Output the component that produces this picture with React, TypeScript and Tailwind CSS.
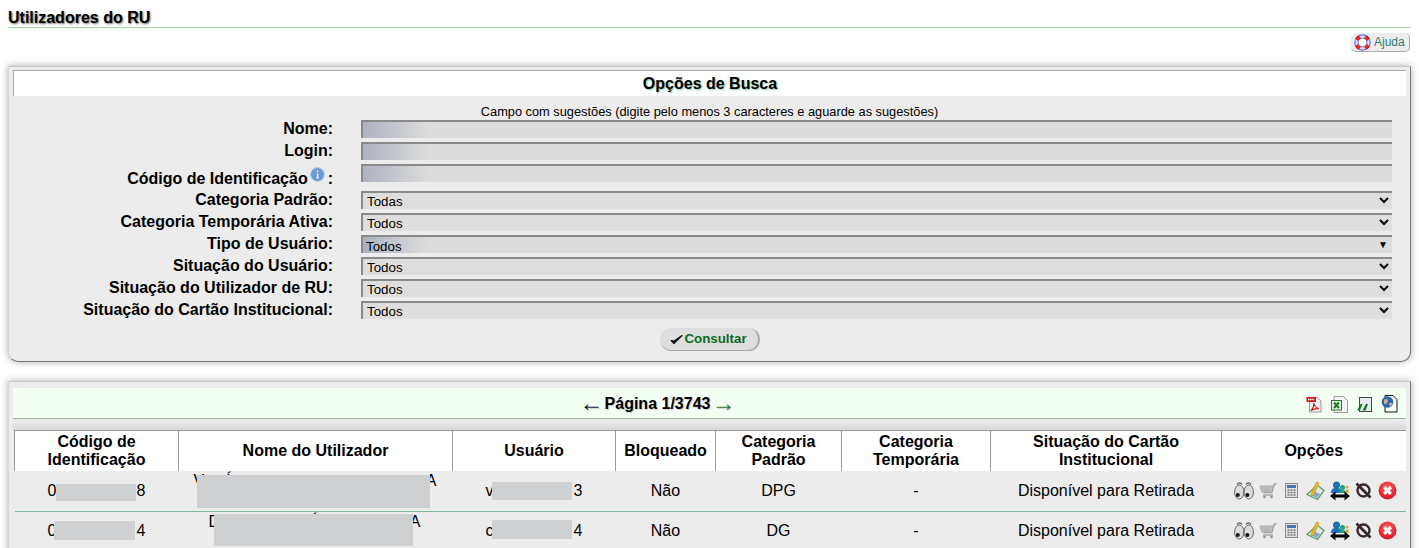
const font = { fontFamily: '"Liberation Sans", Arial, sans-serif' };

const textFields = ['Nome:', 'Login:'];

const selects = [
  { label: 'Categoria Padrão:', value: 'Todas' },
  { label: 'Categoria Temporária Ativa:', value: 'Todos' },
  { label: 'Tipo de Usuário:', value: 'Todos', active: true },
  { label: 'Situação do Usuário:', value: 'Todos' },
  { label: 'Situação do Utilizador de RU:', value: 'Todos' },
  { label: 'Situação do Cartão Institucional:', value: 'Todos' },
];

const columns = [
  { title: ['Código de', 'Identificação'], width: 'w-[164px]' },
  { title: ['Nome do Utilizador'], width: 'w-[274px]' },
  { title: ['Usuário'], width: 'w-[163px]' },
  { title: ['Bloqueado'], width: 'w-[100px]' },
  { title: ['Categoria', 'Padrão'], width: 'w-[126px]' },
  { title: ['Categoria', 'Temporária'], width: 'w-[149px]' },
  { title: ['Situação do Cartão', 'Institucional'], width: 'w-[231px]' },
  { title: ['Opções'], width: 'w-[184px]' },
];

const rows = [
  {
    height: 'h-[41px]',
    code: ['0', '8'], codeMask: 'left-[41px] w-[80px] top-[13px] h-[17px]',
    name: { first: 'V', accent: 'ml-[22px]', box: 'pl-[15px] pr-[16px]', mask: 'left-[18px] w-[233px] top-[4px] h-[33px]' },
    user: ['v', '3'], userMask: 'left-[39px] w-[80px] top-[11px] h-[18px]',
    blocked: 'Não', category: 'DPG',
  },
  {
    height: 'h-[38px]',
    code: ['0', '4'], codeMask: 'left-[39px] w-[81px] top-[9px] h-[19px]',
    name: { first: 'D', accent: 'ml-[92px]', box: 'pl-[30px] pr-[32px]', mask: 'left-[35px] w-[199px] top-[2px] h-[32px]' },
    user: ['c', '4'], userMask: 'left-[39px] w-[80px] top-[8px] h-[19px]',
    blocked: 'Não', category: 'DG',
  },
];

function Lifebuoy() {
  return (
    <svg width="17" height="17" viewBox="0 0 17 17">
      <circle cx="8.5" cy="8.5" r="7.7" fill="#dcdcff" stroke="#6f6fdc" strokeWidth="1.2" />
      <circle cx="8.5" cy="8.5" r="4.4" fill="#fff" stroke="#6f6fdc" strokeWidth="1" />
      <path d="M2.800 2.800 5.400 5.400M14.200 2.800 11.600 5.400M2.800 14.200 5.400 11.600M14.200 14.200 11.600 11.600" stroke="#c4160c" strokeWidth="4.200" />
      <circle cx="4.500" cy="4.500" r="1.300" fill="#ff3a1a" />
      <circle cx="12.500" cy="4.500" r="1.300" fill="#ff3a1a" />
      <circle cx="4.500" cy="12.500" r="1.300" fill="#ff3a1a" />
      <circle cx="12.500" cy="12.500" r="1.300" fill="#ff3a1a" />
    </svg>
  );
}

function InfoIcon() {
  return (
    <svg width="15" height="15" viewBox="0 0 15 15">
      <circle cx="7.5" cy="7.5" r="6.8" fill="#6f9ad2" stroke="#a9c0de" strokeWidth="1" />
      <path d="M6.400 6.400h1.800v4h1v.8H6.200v-.8h.9V7.200h-.7zM6.900 3.600h1.300v1.500H6.900z" fill="#fff" />
    </svg>
  );
}

function CheckIcon() {
  return (
    <svg width="13" height="11" viewBox="0 0 13 11">
      <path d="M1 6.500 4 9.500 12 1.500 4.200 7z" fill="#111" stroke="#111" strokeWidth="1.100" strokeLinejoin="round" />
    </svg>
  );
}

function PdfIcon() {
  return (
    <svg width="17" height="17" viewBox="0 0 17 17">
      <path d="M3.500 1.500h8l3.500 3.500v11H3.500z" fill="#f2f2f2" stroke="#9a9a9a" />
      <rect x="0.500" y="1" width="9.500" height="5" fill="#d8161c" />
      <path d="M2 3.500h6.500" stroke="#fff" strokeWidth="1.400" strokeDasharray="1.500 .6" />
      <path d="M5 14.500c2-2 3-5 3-7.500 .6 3 2 5 5 5.700-3-.4-5.500 .2-8 1.800z" fill="none" stroke="#d8161c" strokeWidth="1.100" />
    </svg>
  );
}

function XlsIcon() {
  return (
    <svg width="17" height="17" viewBox="0 0 17 17">
      <path d="M3 .500h9.500l4 4v12H3z" fill="#f4f4f4" stroke="#9a9a9a" />
      <rect x="0.500" y="4.500" width="10" height="9.500" fill="#e6f2e6" stroke="#2d7a2d" />
      <path d="M3 6.500l5 5.500M8 6.500l-5 5.500" stroke="#1f7a1f" strokeWidth="2" />
    </svg>
  );
}

function ExportIcon() {
  return (
    <svg width="17" height="17" viewBox="0 0 17 17">
      <rect x="3.500" y="1.500" width="12" height="14" fill="#e4ecf2" stroke="#444" />
      <path d="M1 14.500l3.500-6.500h2L4 14.500zM6.500 14.500l3.500-6.500h2l-2.500 6.500z" fill="#0f7a1f" />
    </svg>
  );
}

function GlobeDocIcon() {
  return (
    <svg width="17" height="18" viewBox="0 0 17 18">
      <path d="M4 .500h8l4 4v12.500H4z" fill="#fff" stroke="#111" />
      <circle cx="6.500" cy="7" r="5.800" fill="#2d62b5" />
      <path d="M3 4.500c2-1 3.500-.6 4 .7s-1 2-1.500 3.500-2 .8-2.500-.7zM8 8c1.500-.5 3-.2 3.500.6-.4 1.800-2 2.800-3 3z" fill="#c9b27a" />
    </svg>
  );
}

function EyesIcon() {
  return (
    <svg width="20" height="19" viewBox="0 0 20 19">
      <path d="M3 3.500C4 1.500 7 1.500 8 3.500M12 3.500C13 1.500 16 1.500 17 3.500" fill="none" stroke="#666" strokeWidth="1.300" />
      <ellipse cx="5.200" cy="11" rx="4.700" ry="7" fill="#dcdcdc" stroke="#666" />
      <ellipse cx="14.800" cy="11" rx="4.700" ry="7" fill="#dcdcdc" stroke="#666" />
      <circle cx="3.800" cy="14" r="2" fill="#111" />
      <circle cx="13.400" cy="14" r="2" fill="#111" />
    </svg>
  );
}

function CartIcon() {
  return (
    <svg width="18" height="17" viewBox="0 0 18 17">
      <path d="M17.500 1.500l-2.500 1-2 8H4.500" fill="none" stroke="#a3a3a3" strokeWidth="1.400" />
      <path d="M1 4h13.500l-1.500 6H3z" fill="#d0d0d0" stroke="#a8a8a8" />
      <path d="M1.500 6h12.500M2.500 8h11M5 4l1 6M8 4v6M11 4l-1 6" stroke="#a8a8a8" strokeWidth=".7" />
      <path d="M4 13h10" stroke="#a3a3a3" strokeWidth="1.400" />
      <circle cx="5.500" cy="15" r="1.300" fill="#8f8f8f" />
      <circle cx="12.500" cy="15" r="1.300" fill="#8f8f8f" />
    </svg>
  );
}

function CalculatorIcon() {
  return (
    <svg width="13" height="15" viewBox="0 0 13 15">
      <rect x="0.500" y="0.500" width="12" height="14" fill="#e4e4e4" stroke="#8a8a8a" />
      <rect x="2" y="2" width="9" height="3" fill="#4c6fb5" />
      <path d="M2.500 7h2M5.500 7h2M8.500 7h2M2.500 9.500h2M5.500 9.500h2M8.500 9.500h2M2.500 12h2M5.500 12h2M8.500 12h2" stroke="#777" strokeWidth="1.300" />
    </svg>
  );
}

function EditIcon() {
  return (
    <svg width="19" height="20" viewBox="0 0 19 20">
      <path d="M1 13.500 11 4l7 5.500-6.500 9z" fill="#dbe8f4" stroke="#5da55d" strokeWidth="1.300" />
      <path d="M4.500 14l5-3 4.500 2-3 4z" fill="#7fa9d6" />
      <path d="M5 13 10.500 1 13 2 8 13.500 5 15.500z" fill="#f0b71e" stroke="#c48a10" strokeWidth=".6" />
    </svg>
  );
}

function SwapUsersIcon() {
  return (
    <svg width="20" height="20" viewBox="0 0 20 20">
      <circle cx="6.500" cy="4" r="3.500" fill="#1f6fb8" />
      <path d="M1 12c0-4 2-5 5.500-5S12 8 12 12z" fill="#1f6fb8" />
      <circle cx="12.500" cy="6.500" r="2.500" fill="#1fa67a" />
      <path d="M9 12c0-2.500 1.500-3 3.500-3S16 9.500 16 12z" fill="#1fa67a" />
      <circle cx="17" cy="6" r="1.500" fill="#d9a441" />
      <path d="M15 12c0-2.500 1-3.500 2-3.500s2 1 2 3.500z" fill="#d9a441" />
      <path d="M3 15h14" stroke="#000" strokeWidth="3" />
      <path d="M0 15 5.500 10.500v9zM20 15 14.500 10.500v9z" fill="#000" />
    </svg>
  );
}

function NoSignIcon() {
  return (
    <svg width="17" height="17" viewBox="0 0 17 17">
      <circle cx="8.500" cy="8.500" r="6" fill="none" stroke="#34262a" strokeWidth="2.400" />
      <path d="M1.500 1.500 15.500 15.500" stroke="#34262a" strokeWidth="2.800" />
    </svg>
  );
}

function RemoveIcon() {
  return (
    <svg width="19" height="19" viewBox="0 0 18 18">
      <defs>
        <radialGradient id="removeRed" cx="50%" cy="35%" r="65%">
          <stop offset="0%" stopColor="#ff6a6a" />
          <stop offset="100%" stopColor="#d80f1e" />
        </radialGradient>
      </defs>
      <circle cx="9" cy="9" r="8.500" fill="url(#removeRed)" />
      <path d="M5.800 5.800l6.400 6.400M12.200 5.800l-6.400 6.400" stroke="#fff" strokeWidth="2.800" />
    </svg>
  );
}

const rowIcons = [EyesIcon, CartIcon, CalculatorIcon, EditIcon, SwapUsersIcon, NoSignIcon, RemoveIcon];

function Masked({ parts, mask }: { parts: string[]; mask: string }) {
  return (
    <div className="relative h-full flex items-center justify-center">
      <span>{parts[0]}</span>
      <span className="w-[80px]" />
      <span>{parts[1]}</span>
      <div className={`absolute bg-[#cfd0d2] ${mask}`} />
    </div>
  );
}

function Panel({ className, children }: { className: string; children: React.ReactNode }) {
  return (
    <div className={`bg-[#ececec] border-t border-l border-t-[#c8c8c8] border-l-[#d8d8d8] border-r border-b border-r-[#777] border-b-[#777] shadow-[0_0_7px_#aaa] ${className}`}>
      {children}
    </div>
  );
}

function FormRow({ label, children, className }: { label: React.ReactNode; children: React.ReactNode; className?: string }) {
  return (
    <div className={`flex items-center ${className ?? ''}`}>
      <div className="w-[320px] text-right text-[16px] leading-[18px] font-bold text-black whitespace-nowrap">{label}</div>
      <div className="relative ml-[28px] w-[1031px] h-full">{children}</div>
    </div>
  );
}

function TextField() {
  return (
    <input
      type="text"
      className="block w-full h-full border-t-2 border-l-2 border-[#8a8a8a] bg-[#dcdcdc] bg-[linear-gradient(90deg,#adb2c0_0px,#dcdcdc_65px)] outline-none"
    />
  );
}

export default function App() {
  return (
    <div style={font} className="h-[548px] w-[1419px] overflow-hidden bg-white text-black pt-[8px] px-[8px]">
      <h1 className="h-[20px] border-b border-[#9dd69d] text-[16px] leading-[19px] font-bold [text-shadow:1px_1px_2px_#666]">
        Utilizadores do RU
      </h1>

      <div className="flex justify-end mt-[5px] pr-[1px]">
        <button className="w-[59px] h-[19px] flex items-center gap-[3px] pl-[3px] rounded-[5px] bg-[#ececec] border-r border-b border-[#aaa] text-[12px] text-[#2e7d6e]">
          <Lifebuoy />
          Ajuda
        </button>
      </div>

      <Panel className="mt-[14px] h-[296px] rounded-b-[10px] pt-[3px] px-[4px]">
        <div className="h-[26px] bg-white border-t border-l border-[#aaa] text-center text-[16px] leading-[25px] font-bold [text-shadow:1px_1px_2px_#7fbf9f]">
          Opções de Busca
        </div>
        <div className="h-[24px] pt-[8px] text-center text-[12.8px] leading-[16px]">
          Campo com sugestões (digite pelo menos 3 caracteres e aguarde as sugestões)
        </div>
        {textFields.map((label) => (
          <FormRow key={label} label={label} className="h-[18px] mb-[4px]">
            <TextField />
          </FormRow>
        ))}
        <FormRow
          className="h-[18px] mb-[9px]"
          label={
            <span className="relative top-[6px] inline-flex items-start">
              Código de Identificação
              <span className="relative -top-[3px] ml-[2px] mr-[3px]"><InfoIcon /></span>
              :
            </span>
          }
        >
          <TextField />
        </FormRow>
        {selects.map((item) => (
          <FormRow key={item.label} label={item.label} className="h-[18px] mb-[4px]">
            <select
              defaultValue={item.value}
              className={`block w-full h-full border-t-2 border-l-2 border-[#8a8a8a] text-[13.33px] outline-none ${
                item.active ? 'appearance-none pl-[3px] bg-[linear-gradient(90deg,#adb2c0_0px,#dcdcdc_65px)]' : 'bg-[#dedede]'
              }`}
            >
              <option>{item.value}</option>
            </select>
            {item.active && (
              <span className="absolute right-[4px] top-[3px] text-[10px] leading-[14px] pointer-events-none">▼</span>
            )}
          </FormRow>
        ))}
        <div className="flex justify-center mt-[9px]">
          <button className="w-[100px] h-[23px] flex items-center justify-center gap-[1px] rounded-full bg-[#dedede] border-r-2 border-b border-[#aaa] text-[13.33px] font-bold text-[#0a6b1e]">
            <CheckIcon />
            Consultar
          </button>
        </div>
      </Panel>

      <Panel className="mt-[19px] h-[200px] pt-[6px] px-[4px]">
        <div className="relative h-[31px] pr-[104px] pt-[2px] bg-[#f4fff4] border-b border-[#aaa] flex items-center justify-center gap-[1px] text-[16px] font-bold [text-shadow:1px_1px_1px_#ccc]">
          <span className="font-normal text-[24px] leading-none pb-[3px] text-[#14213d]">←</span>
          Página 1/3743
          <span className="font-normal text-[24px] leading-none pb-[3px] text-[#2e7d32]">→</span>
          <div className="absolute right-[8px] top-[7px] flex items-center gap-[8px]">
            <PdfIcon />
            <XlsIcon />
            <ExportIcon />
            <GlobeDocIcon />
          </div>
        </div>

        <div className="h-[11px] bg-[linear-gradient(#ececec,#dadada)]" />

        <table className="table-fixed border-collapse w-[1391px] ml-[1px] text-[16px]">
          <thead>
            <tr className="h-[40px] bg-white">
              {columns.map((col) => (
                <th key={col.title[0]} className={`${col.width} border-t border-l border-[#999] font-bold leading-[18px] p-0`}>
                  {col.title.map((line) => <div key={line}>{line}</div>)}
                </th>
              ))}
            </tr>
          </thead>
          <tbody>
            {rows.map((row) => (
              <tr key={row.category} className={`${row.height} border-b border-[#7fb898] text-center bg-[#ececec]`}>
                <td className={`p-0 ${row.height}`}><Masked parts={row.code} mask={row.codeMask} /></td>
                <td className={`p-0 align-top ${row.height}`}>
                  <div className="relative h-full">
                    <div className={`flex text-[16px] leading-[18px] pt-[1px] ${row.name.box}`}>
                      <span>{row.name.first}</span>
                      <span className={row.name.accent}>Í</span>
                      <span className="ml-auto">A</span>
                    </div>
                    <div className={`absolute bg-[#cfd0d2] ${row.name.mask}`} />
                  </div>
                </td>
                <td className={`p-0 ${row.height}`}><Masked parts={row.user} mask={row.userMask} /></td>
                <td className="p-0">{row.blocked}</td>
                <td className="p-0">{row.category}</td>
                <td className="p-0">-</td>
                <td className="p-0">Disponível para Retirada</td>
                <td className="p-0">
                  <div className="flex items-center justify-center ml-[4px]">
                    {rowIcons.map((Icon, i) => (
                      <span key={i} className="w-[24px] flex justify-center">
                        <Icon />
                      </span>
                    ))}
                  </div>
                </td>
              </tr>
            ))}
          </tbody>
        </table>
      </Panel>
    </div>
  );
}
